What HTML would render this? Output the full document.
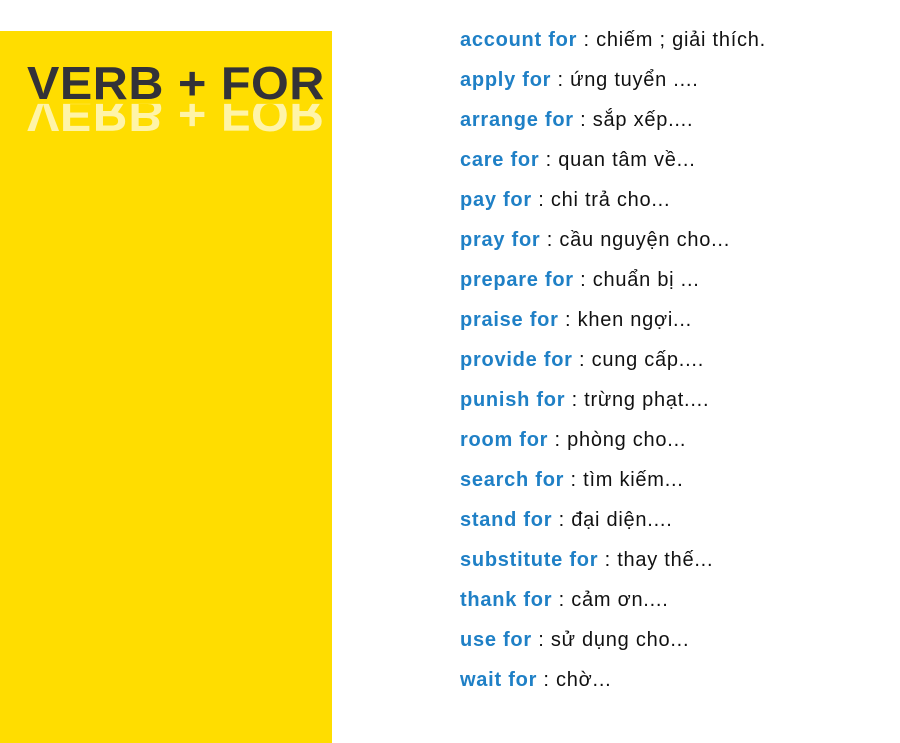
<!DOCTYPE html>
<html><head><meta charset="utf-8"><style>
html,body{margin:0;padding:0;background:#fff;width:900px;height:743px;overflow:hidden;font-family:"Liberation Sans",sans-serif}
.y{position:absolute;left:0;top:31px;width:332px;height:712px;background:#FFDD00;overflow:hidden}
.t{position:absolute;left:27px;top:56px;font-size:46px;font-weight:bold;color:#333238;letter-spacing:0.5px;white-space:nowrap;transform:scaleX(1.055);transform-origin:left}
.r{position:absolute;left:27px;top:88px;font-size:46px;font-weight:bold;color:#fff4a8;letter-spacing:0.5px;white-space:nowrap;transform:scaleY(-1) scaleX(1.055);transform-origin:left center;height:53px;line-height:53px;clip-path:inset(0 0 30% 0)}
.l{position:absolute;left:460px;font-size:20px;color:#111;white-space:nowrap;line-height:24px;letter-spacing:0.75px}
.l b{color:#1f80c6;font-weight:bold}
</style></head><body>
<div class="y"></div>
<div class="t">VERB + FOR</div>
<div class="r">VERB + FOR</div>
<div class="l" style="top:28px"><b>account for</b> : chiếm ; giải thích.</div>
<div class="l" style="top:68px"><b>apply for</b> : ứng tuyển ....</div>
<div class="l" style="top:108px"><b>arrange for</b> : sắp xếp....</div>
<div class="l" style="top:148px"><b>care for</b> : quan tâm về...</div>
<div class="l" style="top:188px"><b>pay for</b> : chi trả cho...</div>
<div class="l" style="top:228px"><b>pray for</b> : cầu nguyện cho...</div>
<div class="l" style="top:268px"><b>prepare for</b> : chuẩn bị ...</div>
<div class="l" style="top:308px"><b>praise for</b> : khen ngợi...</div>
<div class="l" style="top:348px"><b>provide for</b> : cung cấp....</div>
<div class="l" style="top:388px"><b>punish for</b> : trừng phạt....</div>
<div class="l" style="top:428px"><b>room for</b> : phòng cho...</div>
<div class="l" style="top:468px"><b>search for</b> : tìm kiếm...</div>
<div class="l" style="top:508px"><b>stand for</b> : đại diện....</div>
<div class="l" style="top:548px"><b>substitute for</b> : thay thế...</div>
<div class="l" style="top:588px"><b>thank for</b> : cảm ơn....</div>
<div class="l" style="top:628px"><b>use for</b> : sử dụng cho...</div>
<div class="l" style="top:668px"><b>wait for</b> : chờ...</div>
</body></html>
